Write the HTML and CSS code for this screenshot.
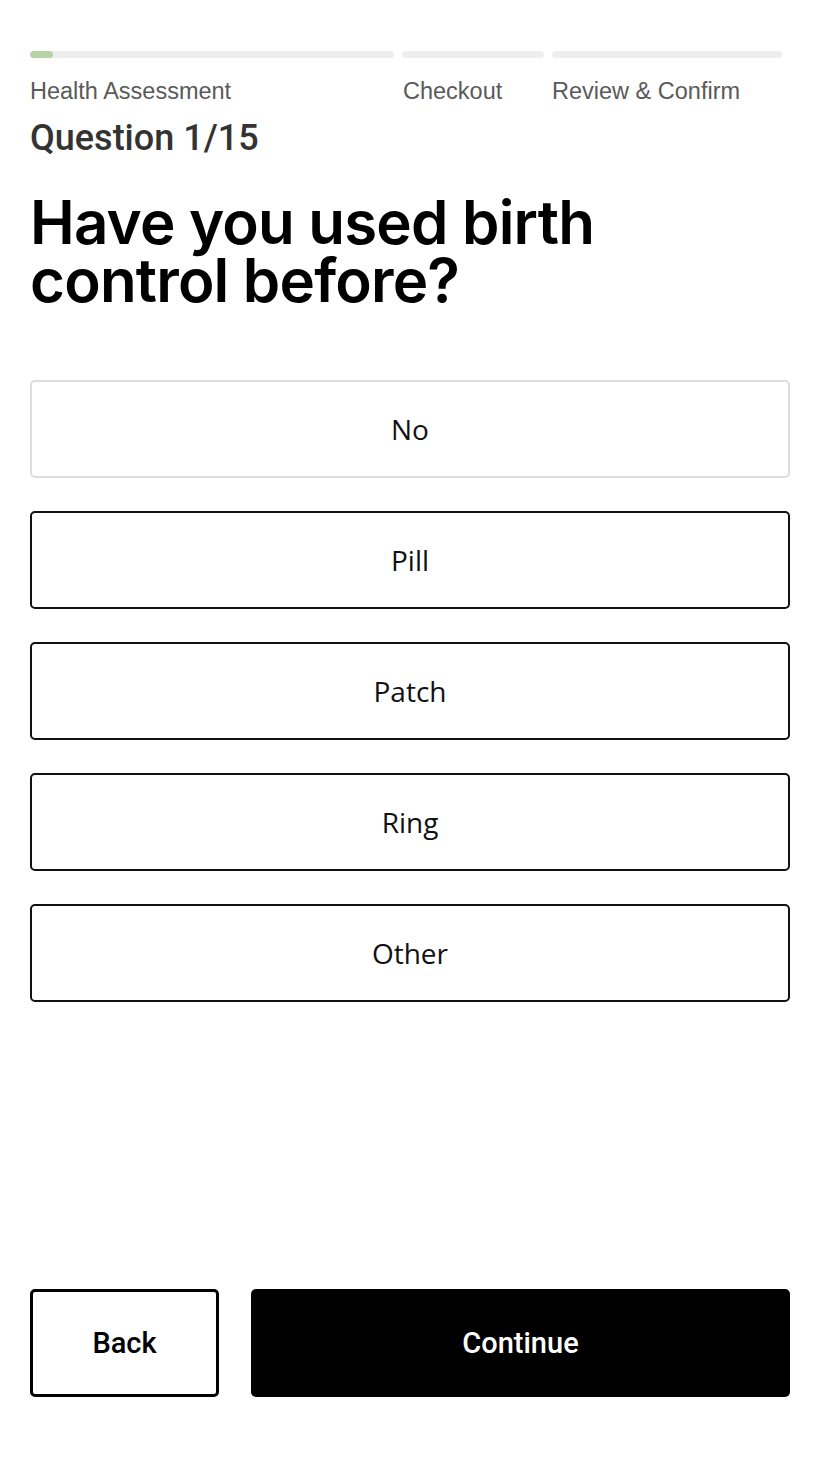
FILE: index.html
```html
<!DOCTYPE html>
<html lang="en">
<head>
    <meta charset="UTF-8">
    <meta name="viewport" content="width=device-width, initial-scale=1.0">
    <title>Health Assessment</title>
    <link rel="stylesheet" href="styles.css">
</head>
<body>
    <div class="page">
        <div class="steps">
            <div class="step step-health">
                <div class="bar"><div class="bar-fill"></div></div>
                <span class="step-label">Health Assessment</span>
            </div>
            <div class="step step-checkout">
                <div class="bar"></div>
                <span class="step-label">Checkout</span>
            </div>
            <div class="step step-review">
                <div class="bar"></div>
                <span class="step-label">Review &amp; Confirm</span>
            </div>
        </div>

        <div class="question-count">Question 1/15</div>
        <h1 class="question">Have you used birth control before?</h1>

        <div class="options">
            <button class="option option-none">No</button>
            <button class="option">Pill</button>
            <button class="option">Patch</button>
            <button class="option">Ring</button>
            <button class="option">Other</button>
        </div>

        <div class="actions">
            <button class="btn btn-back">Back</button>
            <button class="btn btn-continue">Continue</button>
        </div>
    </div>
</body>
</html>
```

FILE: styles.css
```css
body {
    margin: 0;
    background-color: #ffffff;
    color: #000000;
    font-family: "Liberation Sans", Arial, sans-serif;
}

.page {
    width: 760px;
    margin: 0 auto;
    padding-top: 51px;
    height: 1458px;
    box-sizing: border-box;
    display: flex;
    flex-direction: column;
}

.steps {
    display: flex;
    gap: 8px;
}

.step-health {
    width: 364px;
}

.step-checkout {
    width: 142px;
}

.step-review {
    width: 230px;
}

.bar {
    height: 7px;
    border-radius: 4px;
    background-color: #eeeeee;
    overflow: hidden;
}

.bar-fill {
    width: 23px;
    height: 100%;
    border-radius: 4px;
    background-color: #b5d4a6;
}

.step-label {
    display: block;
    margin-top: 20px;
    font-size: 23.5px;
    color: #5a5a5a;
    white-space: nowrap;
}

.step-checkout .step-label {
    padding-left: 1px;
}

.question-count {
    margin-top: 12px;
    font-family: Roboto, sans-serif;
    font-size: 36px;
    font-weight: 500;
    color: #333333;
}

.question {
    margin: 34px 0 0;
    font-family: Inter, sans-serif;
    font-size: 60px;
    font-weight: 600;
    line-height: 58px;
    letter-spacing: -0.8px;
}

.options {
    margin-top: 71px;
    display: flex;
    flex-direction: column;
    gap: 33px;
}

.option {
    height: 98px;
    border: 2px solid #111111;
    border-radius: 5px;
    background-color: #ffffff;
    font-family: "Open Sans", sans-serif;
    font-size: 28px;
    color: #111111;
    cursor: pointer;
}

.option-none {
    border-color: #dddddd;
}

.actions {
    margin-top: auto;
    margin-bottom: 61px;
    display: flex;
    gap: 32px;
}

.btn {
    height: 108px;
    border-radius: 5px;
    font-family: Roboto, sans-serif;
    font-size: 29px;
    font-weight: 500;
    cursor: pointer;
}

.btn-back {
    width: 189px;
    border: 3px solid #000000;
    background-color: #ffffff;
    color: #000000;
}

.btn-continue {
    flex: 1;
    border: none;
    background-color: #000000;
    color: #ffffff;
}
```
